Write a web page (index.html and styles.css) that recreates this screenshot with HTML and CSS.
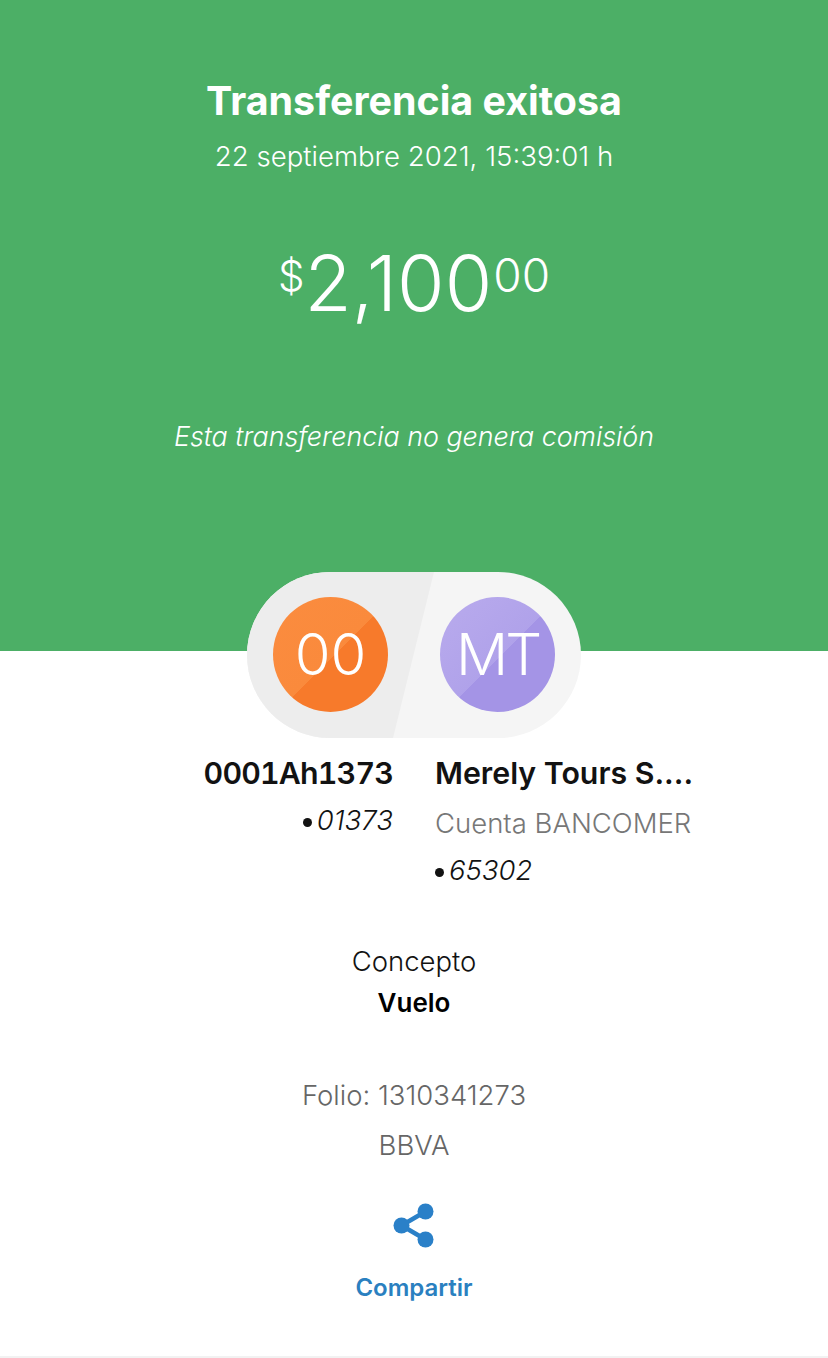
FILE: index.html
```html
<!DOCTYPE html>
<html lang="es">
<head>
    <meta charset="UTF-8">
    <meta name="viewport" content="width=device-width, initial-scale=1.0">
    <title>Transferencia exitosa</title>
    <link rel="stylesheet" href="styles.css">
</head>
<body>
    <div class="screen">
        <header class="hero">
            <h1 class="hero-title">Transferencia exitosa</h1>
            <div class="hero-date">22 septiembre 2021, 15:39:01 h</div>
            <div class="amount"><sup class="amount-sign">$</sup><span class="amount-main">2,100</span><sup class="amount-cents">00</sup></div>
            <div class="hero-note">Esta transferencia no genera comisión</div>
        </header>

        <div class="pill">
            <div class="avatar avatar-orange">00</div>
            <div class="avatar avatar-purple">MT</div>
        </div>

        <div class="accounts">
            <div class="account account-from">
                <div class="account-name">0001Ah1373</div>
                <div class="account-number"><span class="dot"></span>01373</div>
            </div>
            <div class="account">
                <div class="account-name">Merely Tours S....</div>
                <div class="account-bank">Cuenta BANCOMER</div>
                <div class="account-number"><span class="dot"></span>65302</div>
            </div>
        </div>

        <div class="concept">
            <div class="concept-label">Concepto</div>
            <div class="concept-value">Vuelo</div>
        </div>

        <div class="meta">
            <div>Folio: 1310341273</div>
            <div>BBVA</div>
        </div>

        <div class="share">
            <svg class="share-icon" width="41" height="45" viewBox="0 0 41 45">
                <path d="M32.5 8.5 L8.5 22.5 L32.5 36.5" fill="none" stroke="#2a80c8" stroke-width="4.5"/>
                <circle cx="32.5" cy="8.5" r="8" fill="#2a80c8"/>
                <circle cx="8.5" cy="22.5" r="8" fill="#2a80c8"/>
                <circle cx="32.5" cy="36.5" r="8" fill="#2a80c8"/>
            </svg>
            <div class="share-label">Compartir</div>
        </div>
    </div>
</body>
</html>
```

FILE: styles.css
```css
* {
    box-sizing: border-box;
}
html, body {
    margin: 0;
    padding: 0;
}
body {
    background-color: #fff;
    font-family: "Inter", "Roboto", sans-serif;
}
.screen {
    height: 1358px;
    display: flex;
    flex-direction: column;
    align-items: center;
    text-align: center;
    border-bottom: 2px solid #f2f2f2;
    overflow: hidden;
}
.hero {
    width: 100%;
    height: 651px;
    flex-shrink: 0;
    background-color: #4caf66;
    color: #fff;
    padding-top: 78px;
}
.hero-title {
    margin: 0;
    font-size: 39.4px;
    line-height: 46px;
    font-weight: 700;
}
.hero-date {
    margin-top: 16px;
    font-size: 27.6px;
    line-height: 32px;
    font-weight: 300;
}
.amount {
    margin-top: 66px;
    height: 90px;
    display: flex;
    justify-content: center;
    align-items: flex-start;
    font-weight: 300;
    line-height: 1;
}
.amount-sign {
    margin-top: 13px;
    font-size: 42px;
    line-height: 50px;
}
.amount-cents {
    margin-top: 12px;
    margin-left: 1px;
    font-size: 46px;
    line-height: 50px;
}
.amount-main {
    font-size: 77px;
    line-height: 90px;
}
.hero-note {
    margin-top: 91px;
    font-size: 26.8px;
    line-height: 34px;
    font-weight: 300;
    font-style: italic;
}
.pill {
    position: relative;
    flex-shrink: 0;
    width: 334px;
    height: 166px;
    margin-top: -79px;
    padding: 0 26px 2px;
    display: flex;
    justify-content: space-between;
    align-items: center;
    border-radius: 83px;
    background-color: #f5f5f5;
    overflow: hidden;
}
.pill::before {
    content: "";
    position: absolute;
    inset: 0;
    background-color: #ededed;
    clip-path: polygon(0 0, 187px 0, 146px 100%, 0 100%);
}
.avatar {
    position: relative;
    width: 115px;
    height: 115px;
    border-radius: 50%;
    color: #fff;
    font-size: 58px;
    font-weight: 300;
    line-height: 115px;
}
.avatar-orange {
    background: linear-gradient(135deg, #fb8c3f 0%, #fa8a3c 52%, #f77a2b 52%, #f77a2b 100%);
}
.avatar-purple {
    background: linear-gradient(135deg, #b9abed 0%, #b0a2ea 52%, #a494e6 52%, #a494e6 100%);
    letter-spacing: -3px;
}
.accounts {
    width: 100%;
    margin-top: 14px;
    display: grid;
    grid-template-columns: 1fr 1fr;
    column-gap: 42px;
    text-align: left;
}
.account-from {
    text-align: right;
}
.account-from .account-name {
    font-variant-numeric: tabular-nums;
    letter-spacing: -0.8px;
}
.account-from .account-number {
    margin-top: 9px;
}
.account-name {
    font-size: 30.3px;
    line-height: 42px;
    font-weight: 600;
    color: #121212;
    white-space: nowrap;
}
.account-bank {
    margin-top: 12px;
    font-size: 27.5px;
    line-height: 34px;
    font-weight: 300;
    color: #777;
    white-space: nowrap;
}
.account-number {
    margin-top: 13px;
    font-size: 27.5px;
    line-height: 34px;
    font-weight: 300;
    font-style: italic;
    color: #121212;
}
.dot {
    display: inline-block;
    width: 9px;
    height: 9px;
    margin-right: 5px;
    border-radius: 50%;
    background-color: #121212;
    vertical-align: middle;
}
.concept {
    margin-top: 53px;
}
.concept-label {
    font-size: 27.5px;
    line-height: 42px;
    font-weight: 300;
    color: #121212;
}
.concept-value {
    font-size: 26px;
    line-height: 42px;
    font-weight: 600;
    color: #000;
}
.meta {
    margin-top: 46px;
    font-size: 27.5px;
    line-height: 50px;
    font-weight: 300;
    color: #666;
}
.share {
    margin-top: 33px;
}
.share-icon {
    display: block;
    margin: 0 auto;
}
.share-label {
    margin-top: 25px;
    font-size: 24px;
    line-height: 30px;
    font-weight: 600;
    color: #2a80c0;
}
```
